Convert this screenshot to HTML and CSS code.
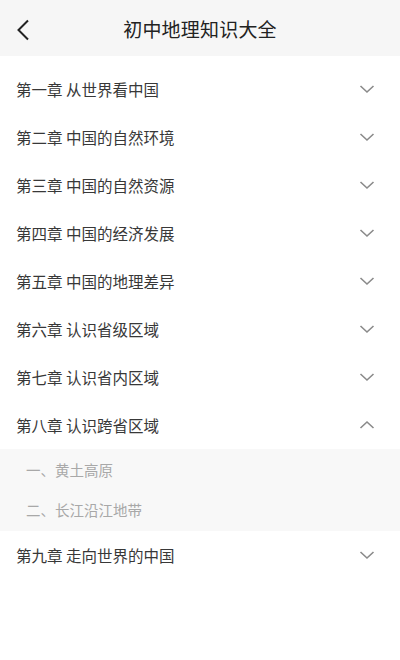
FILE: index.html
```html
<!DOCTYPE html>
<html lang="zh">
<head>
<meta charset="utf-8">
<link rel="stylesheet" href="styles.css">
</head>
<body>
<div class="header">
  <svg class="back" width="14" height="22" viewBox="0 0 14 22"><path d="M12 1.5 L2.5 11 L12 20.5" fill="none" stroke="#222" stroke-width="2"/></svg>
  <div class="title">初中地理知识大全</div>
</div>
<div class="list">
  <div class="row"><span>第一章 从世界看中国</span><svg class="chev" width="16" height="10" viewBox="0 0 16 10"><path d="M1.5 2 L8 8 L14.5 2" fill="none" stroke="#8a8a8a" stroke-width="1.6"/></svg></div>
  <div class="row"><span>第二章 中国的自然环境</span><svg class="chev" width="16" height="10" viewBox="0 0 16 10"><path d="M1.5 2 L8 8 L14.5 2" fill="none" stroke="#8a8a8a" stroke-width="1.6"/></svg></div>
  <div class="row"><span>第三章 中国的自然资源</span><svg class="chev" width="16" height="10" viewBox="0 0 16 10"><path d="M1.5 2 L8 8 L14.5 2" fill="none" stroke="#8a8a8a" stroke-width="1.6"/></svg></div>
  <div class="row"><span>第四章 中国的经济发展</span><svg class="chev" width="16" height="10" viewBox="0 0 16 10"><path d="M1.5 2 L8 8 L14.5 2" fill="none" stroke="#8a8a8a" stroke-width="1.6"/></svg></div>
  <div class="row"><span>第五章 中国的地理差异</span><svg class="chev" width="16" height="10" viewBox="0 0 16 10"><path d="M1.5 2 L8 8 L14.5 2" fill="none" stroke="#8a8a8a" stroke-width="1.6"/></svg></div>
  <div class="row"><span>第六章 认识省级区域</span><svg class="chev" width="16" height="10" viewBox="0 0 16 10"><path d="M1.5 2 L8 8 L14.5 2" fill="none" stroke="#8a8a8a" stroke-width="1.6"/></svg></div>
  <div class="row"><span>第七章 认识省内区域</span><svg class="chev" width="16" height="10" viewBox="0 0 16 10"><path d="M1.5 2 L8 8 L14.5 2" fill="none" stroke="#8a8a8a" stroke-width="1.6"/></svg></div>
  <div class="row"><span>第八章 认识跨省区域</span><svg class="chev" width="16" height="10" viewBox="0 0 16 10"><path d="M1.5 8 L8 2 L14.5 8" fill="none" stroke="#8a8a8a" stroke-width="1.6"/></svg></div>
  <div class="sub">
    <div class="subrow">一、黄土高原</div>
    <div class="subrow">二、长江沿江地带</div>
  </div>
  <div class="row"><span>第九章 走向世界的中国</span><svg class="chev" width="16" height="10" viewBox="0 0 16 10"><path d="M1.5 2 L8 8 L14.5 2" fill="none" stroke="#8a8a8a" stroke-width="1.6"/></svg></div>
</div>
</body>
</html>
```
FILE: styles.css
```css
html, body {
  margin: 0;
  padding: 0;
  background: #ffffff;
  font-family: "Noto Sans CJK SC", "Noto Sans", sans-serif;
}
.header {
  height: 56px;
  background: #f6f6f6;
  display: flex;
  align-items: center;
  justify-content: center;
  position: relative;
}
.back {
  position: absolute;
  left: 16px;
  top: 19px;
}
.title {
  font-size: 19px;
  color: #222;
  letter-spacing: 0.2px;
}
.list {
  padding-top: 9px;
}
.row {
  height: 48px;
  display: flex;
  align-items: center;
  justify-content: space-between;
  padding: 0 25px 0 16px;
  font-size: 15.5px;
  color: #383838;
}
.sub {
  background: #f8f8f8;
  padding: 0 0 2px 0;
}
.subrow {
  height: 40px;
  display: flex;
  align-items: center;
  padding-left: 26px;
  font-size: 14.5px;
  color: #a8a8a8;
}
```
